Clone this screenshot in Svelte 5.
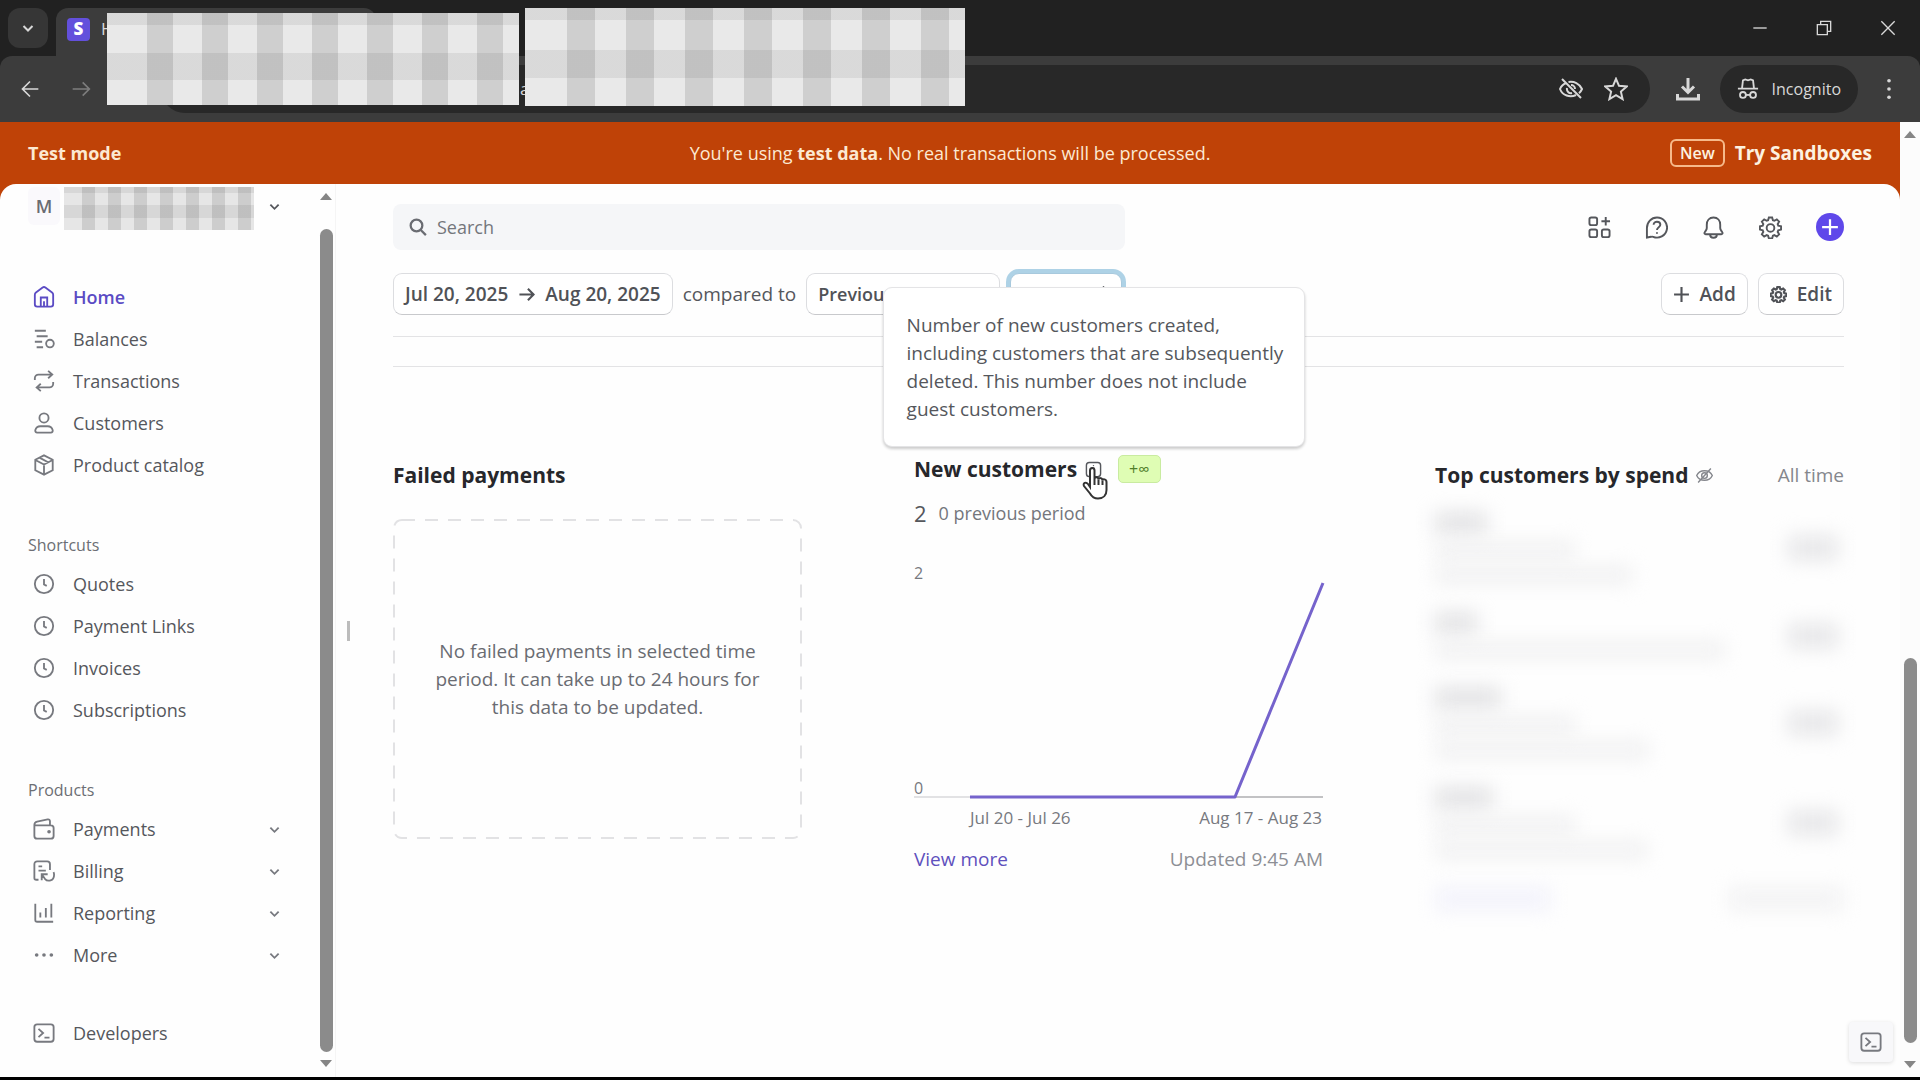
<script>
  const mainNav = [
    { label: 'Home', icon: 'home', active: true },
    { label: 'Balances', icon: 'balances' },
    { label: 'Transactions', icon: 'transfer' },
    { label: 'Customers', icon: 'person' },
    { label: 'Product catalog', icon: 'box' }
  ];
  const shortcuts = ['Quotes', 'Payment Links', 'Invoices', 'Subscriptions'];
  const products = [
    { label: 'Payments', icon: 'wallet' },
    { label: 'Billing', icon: 'billing' },
    { label: 'Reporting', icon: 'chart' },
    { label: 'More', icon: 'more' }
  ];
  const headerIcons = [
    { label: 'Apps', icon: 'apps' },
    { label: 'Help', icon: 'help' },
    { label: 'Notifications', icon: 'bell' },
    { label: 'Settings', icon: 'gear' }
  ];
  // Obscured customer rows: bar widths for the name and the detail lines
  const hiddenRows = [
    { name: 52, lines: [140, 198] },
    { name: 42, lines: [290] },
    { name: 66, lines: [140, 214] },
    { name: 58, lines: [140, 212] }
  ];
</script>

{#snippet icon(name)}
  <svg class="icon" viewBox="0 0 24 24" aria-hidden="true">
    {#if name === 'home'}
      <path d="M2 9.5c0-1 .4-1.8 1.200-2.400L10.500 1.600a2.500 2.500 0 0 1 3 0l7.300 5.500c.8.6 1.200 1.400 1.200 2.400V20a2.500 2.500 0 0 1-2.500 2.500h-15A2.500 2.500 0 0 1 2 20z" /><path d="M8.500 22.500v-10h7v10M12 22.500v-6" />
    {:else if name === 'balances'}
      <path d="M2 3h12M4 9h12M2 15h8M4 21h7" /><circle cx="18.500" cy="17" r="4.200" />
    {:else if name === 'transfer'}
      <path d="M2 11V9c0-2.200 1.800-4 4-4h15M16.500 1l4.500 4-4.500 4M22 13v2c0 2.200-1.800 4-4 4H4M8.500 15L4 19l4.500 4" />
    {:else if name === 'person'}
      <circle cx="12" cy="6.500" r="5" /><path d="M4.500 22.500c-1.400 0-2.300-1.200-2-2.600C3.200 17 5.500 15.500 8 15.500h8c2.500 0 4.800 1.500 5.500 4.400.3 1.400-.6 2.600-2 2.600z" />
    {:else if name === 'box'}
      <path d="M12 1.500l9.500 4.800v11.400L12 22.500l-9.500-4.800V6.300zM2.500 6.500L12 11.500l9.500-5M12 11.500v11M7 4l9.500 5" />
    {:else if name === 'clock'}
      <circle cx="12" cy="12" r="10" /><path d="M12 6.500v6l3 1.500" />
    {:else if name === 'wallet'}
      <path d="M1.500 8h18a3 3 0 0 1 3 3v8.500a3 3 0 0 1-3 3h-15a3 3 0 0 1-3-3V7.500C1.500 5.500 2.500 4.500 4.500 4L16 1.500c1.500-.3 2.500.5 2.500 2V8" /><circle cx="17.500" cy="15" r="1" />
    {:else if name === 'billing'}
      <path d="M6 21.500H3.500a2 2 0 0 1-2-2v-15a3 3 0 0 1 3-3h11a3 3 0 0 1 3 3V11M6 7h4M6 11.500h8M9.500 22v-6.500H16M9.500 15.500l3.500 5c3 3.500 10 2.500 10-4.500 0-1-.2-2-.6-2.800" />
    {:else if name === 'chart'}
      <path d="M2.500 2v17.500a2 2 0 0 0 2 2H22M8 11.500v5.500M14 6.500V17M20 2v15" />
    {:else if name === 'more'}
      <g class="solid"><circle cx="4" cy="12" r="2" /><circle cx="12" cy="12" r="2" /><circle cx="20" cy="12" r="2" /></g>
    {:else if name === 'terminal'}
      <rect x="1.500" y="2.500" width="21" height="19" rx="3" /><path d="M6 7.500l5 4.500-5 4.500M12.500 17H18" />
    {:else if name === 'apps'}
      <rect x="1.500" y="1.500" width="8" height="8" rx="2" /><rect x="1.500" y="14" width="8" height="8" rx="2" /><rect x="14.500" y="14" width="8" height="8" rx="2" /><path d="M18.500 1v9M14 5.500h9" />
    {:else if name === 'help'}
      <path d="M12.500 1.500a10.500 10.500 0 1 1-4 20.200c-.8-.3-1.400-.3-2.200 0L2 22.500v-10C2 6.500 6.500 1.500 12.500 1.500z" /><path d="M9 9c0-4 7-4 7 .2 0 2.500-3.500 2.500-3.500 5.300" /><circle class="solid" cx="12.500" cy="17.700" r="1" />
    {:else if name === 'bell'}
      <path d="M12 1.500c-4.500 0-7 3.500-7 7.500v3.500c0 1.200-.4 2-1.200 3l-1 1.500c-.7 1 0 2 1 2h16.400c1 0 1.700-1 1-2l-1-1.500c-.8-1-1.200-1.800-1.200-3V9c0-4-2.500-7.500-7-7.500zM8.500 19.500c0 4.300 7 4.300 7 0" />
    {:else if name === 'gear'}
      <path d="M10.300 1.500h3.400l.8 2.900 1.500.6 2.600-1.500 2.400 2.400L19.500 8.500l.6 1.500 2.900.8v3.400l-2.900.8-.6 1.500 1.500 2.600-2.400 2.400-2.600-1.500-1.500.6-.8 2.900h-3.400l-.8-2.900L8 20l-2.600 1.500L3 19.100l1.500-2.600-.6-1.500-2.900-.8v-3.400l2.900-.8.6-1.500L3 5.900l2.400-2.400L8 5l1.500-.6z" /><circle cx="12" cy="12.500" r="4" />
    {:else if name === 'search'}
      <circle cx="10" cy="10" r="7.800" /><path d="M15.700 16l6.800 6.800" />
    {:else if name === 'plus'}
      <path d="M12 1.500v21M1.500 12h21" />
    {:else if name === 'arrow'}
      <path d="M2 12h20M14 4l8 8-8 8" />
    {:else if name === 'back'}
      <path d="M22 12H3M12 3l-9 9 9 9" />
    {:else if name === 'chevron'}
      <path d="M3 8l9 9 9-9" />
    {:else if name === 'updown'}
      <path d="M6 8l6-6 6 6M6 16l6 6 6-6" />
    {:else if name === 'hidden'}
      <path d="M1 12c4-9 18-9 22 0-4 9-18 9-22 0zM3 22L21 2" /><circle cx="12" cy="12" r="4" />
    {:else if name === 'eyeoff'}
      <path d="M3 2l19 19M7.500 6C4 7 2 9.500 1 12c2.500 6.500 10 9 16 6M9.500 5C15 4 20.500 6.500 23 12c-.7 1.700-1.700 3-3 4.200M8 11c-.6 3 2 6 5 5M12 8c2.200 0 4 1.800 4 4" />
    {:else if name === 'star'}
      <path d="M12 1.800l3 7 7.700.7-5.800 5.100 1.700 7.500-6.600-4-6.600 4 1.700-7.500-5.800-5.100 7.700-.7z" />
    {:else if name === 'download'}
      <path d="M12 1v14M6 9.500l6 6 6-6M1.500 17v5h21v-5" />
    {:else if name === 'incognito'}
      <path d="M1 11.500h22M5.500 11l1-8.500 2.500-1 3 1 3-1 2.500 1 1 8.500" /><circle cx="6.500" cy="18.500" r="3.200" /><circle cx="17.500" cy="18.500" r="3.200" /><path d="M9.700 18.500h4.600" />
    {:else if name === 'dots'}
      <g class="solid"><circle cx="12" cy="3" r="2" /><circle cx="12" cy="12" r="2" /><circle cx="12" cy="21" r="2" /></g>
    {:else if name === 'minimize'}
      <path d="M2 12h20" />
    {:else if name === 'restore'}
      <path d="M2 7h15v15H2zM7 7V2h15v15h-5" />
    {:else if name === 'close'}
      <path d="M2 2l20 20M22 2L2 22" />
    {:else if name === 'info'}
      <rect x="2" y="2" width="20" height="20" rx="4" /><path d="M9 10h3.500v7" /><circle class="solid" cx="12" cy="6.500" r="1" />
    {/if}
  </svg>
{/snippet}

<div class="window">
  <header class="browser">
    <div class="tabstrip">
      <button class="tabsearch" aria-label="Search tabs">{@render icon('chevron')}</button>
      <div class="tab"><span class="favicon">S</span><span>H</span></div>
      <div class="wincontrols">
        <button aria-label="Minimize">{@render icon('minimize')}</button>
        <button aria-label="Restore">{@render icon('restore')}</button>
        <button aria-label="Close">{@render icon('close')}</button>
      </div>
    </div>
    <div class="toolbar">
      <button class="navbtn" aria-label="Back">{@render icon('back')}</button>
      <button class="navbtn dim" aria-label="Forward">{@render icon('arrow')}</button>
      <div class="address">
        <span class="url">a</span>
        <button aria-label="Third-party cookies blocked">{@render icon('eyeoff')}</button>
        <button aria-label="Bookmark">{@render icon('star')}</button>
      </div>
      <button class="download" aria-label="Downloads">{@render icon('download')}</button>
      <button class="incognito">{@render icon('incognito')}Incognito</button>
      <button class="menu" aria-label="Menu">{@render icon('dots')}</button>
    </div>
    <div class="mask mask-tab"></div>
    <div class="mask mask-url"></div>
  </header>

  <div class="viewport">
    <div class="page">
      <div class="banner">
        <strong>Test mode</strong>
        <span>You're using <b>test data</b>. No real transactions will be processed.</span>
        <a href="#sandboxes"><span class="new">New</span>Try Sandboxes</a>
      </div>
      <div class="body">
        <div class="sheet">
          <aside>
            <button class="account" aria-label="Switch account">
              <span class="avatar">M</span><span class="mask-name"></span><span class="caret">{@render icon('chevron')}</span>
            </button>
            <nav>
              <ul>
                {#each mainNav as item}
                  <li><a href="#{item.icon}" class:active={item.active}>{@render icon(item.icon)}{item.label}</a></li>
                {/each}
              </ul>
              <h2>Shortcuts</h2>
              <ul>
                {#each shortcuts as label}
                  <li><a href="#shortcut">{@render icon('clock')}{label}</a></li>
                {/each}
              </ul>
              <h2>Products</h2>
              <ul>
                {#each products as item}
                  <li><button class="group">{@render icon(item.icon)}{item.label}<span class="caret">{@render icon('chevron')}</span></button></li>
                {/each}
              </ul>
              <a class="developers" href="#developers">{@render icon('terminal')}Developers</a>
            </nav>
          </aside>
          <div class="sidescroll"><i class="up"></i><i class="thumb"></i><i class="down"></i></div>
          <div class="resizer"><i></i></div>

          <main>
            <div class="topbar">
              <label class="search">{@render icon('search')}<input type="text" placeholder="Search" aria-label="Search" /></label>
              <div class="actions">
                {#each headerIcons as item}
                  <button aria-label={item.label}>{@render icon(item.icon)}</button>
                {/each}
                <button class="create" aria-label="Create">{@render icon('plus')}</button>
              </div>
            </div>
            <div class="filters">
              <button class="btn">Jul 20, 2025 {@render icon('arrow')} Aug 20, 2025</button>
              <span class="compared">compared to</span>
              <select class="btn period" aria-label="Comparison period"><option>Previous period</option></select>
              <button class="btn focus">Weekly {@render icon('updown')}</button>
              <span class="grow"></span>
              <button class="btn">{@render icon('plus')} Add</button>
              <button class="btn">{@render icon('gear')} Edit</button>
            </div>
            <div class="rules"></div>

            <div class="widgets">
              <section>
                <div class="head"><h3>Failed payments</h3></div>
                <div class="empty">
                  <svg class="dash" aria-hidden="true"><rect x="1" y="1" rx="8" /></svg>
                  <p>No failed payments in selected time period. It can take up to 24 hours for this data to be updated.</p>
                </div>
              </section>

              <section>
                <div class="head compact">
                  <h3>New customers</h3>
                  <span class="infowrap">
                    <button class="info" aria-label="About this metric" aria-describedby="metric-tip">{@render icon('info')}</button>
                    <svg class="cursor" viewBox="0 0 26 34" aria-hidden="true">
                      <path d="M8 21V4.500C8 1 12.500 1 12.500 4.500V13c0-2.500 4-2.500 4 .5 0-2 4-2 4 1 0-2 4-1.500 4 1.500v8c0 5-3 8.500-8.500 8.500-4 0-6-1.500-8-5L2 20c-1.500-3 2-4.500 4-2z" />
                      <path d="M12.500 13v6M16.500 13.500V19M20.500 14.500V19" />
                    </svg>
                    <span class="tooltip" id="metric-tip" role="tooltip">Number of new customers created, including customers that are subsequently deleted. This number does not include guest customers.</span>
                  </span>
                  <span class="badge">+∞</span>
                </div>
                <div class="figures"><span class="big">2</span><span>0 previous period</span></div>
                <div class="chart">
                  <div class="scale"><span>2</span><span>0</span></div>
                  <svg viewBox="0 0 409 237" preserveAspectRatio="none" role="img" aria-label="New customers by week">
                    <path class="axis light" d="M0 235H56" /><path class="axis" d="M56 235H409" />
                    <path class="line" d="M56 235H321L409 21" />
                  </svg>
                </div>
                <div class="dates"><span>Jul 20 - Jul 26</span><span>Aug 17 - Aug 23</span></div>
                <div class="foot"><a href="#more">View more</a><span>Updated 9:45 AM</span></div>
              </section>

              <section>
                <div class="head"><h3>Top customers by spend</h3><span class="muted-icon">{@render icon('hidden')}</span><span class="range">All time</span></div>
                <div class="obscured" aria-hidden="true">
                  {#each hiddenRows as row}
                    <div class="hrow">
                      <div class="bars">
                        <i class="name" style:width="{row.name}px"></i>
                        {#each row.lines as width}
                          <i style:width="{width}px"></i>
                        {/each}
                      </div>
                      <i class="amount"></i>
                    </div>
                  {/each}
                  <div class="hfoot"><i class="link"></i><i></i></div>
                </div>
              </section>
            </div>
          </main>
        </div>
        <button class="workbench" aria-label="Open workbench">{@render icon('terminal')}</button>
      </div>
    </div>
    <div class="pagescroll"><i class="up"></i><i class="thumb"></i><i class="down"></i></div>
  </div>
</div>

<style>
  :global(body) { margin: 0; background: #000; }
  * { box-sizing: border-box; }
  button, input, select { font: inherit; color: inherit; border: 0; background: none; padding: 0; margin: 0; }
  a { color: inherit; text-decoration: none; }
  h2, h3, p, ul { margin: 0; padding: 0; list-style: none; }
  i { display: block; }
  .icon { display: block; width: 22px; height: 22px; flex: none; fill: none; stroke: currentColor; stroke-width: 2; }
  .icon .solid { fill: currentColor; stroke: none; }

  .window { height: 100vh; display: flex; flex-direction: column; overflow: hidden; border-bottom: 3px solid #000; font-family: "Open Sans", "Noto Sans", sans-serif; font-size: 18px; line-height: 28px; color: #55575c; }

  .browser { position: relative; flex: none; background: #212121; color: #d8d8d8; }
  .tabstrip { height: 56px; display: flex; align-items: flex-start; padding: 8px 18px 0 8px; gap: 8px; }
  .tabsearch { width: 40px; height: 40px; border-radius: 12px; background: #363636; display: grid; place-items: center; }
  .tabsearch .icon { width: 12px; stroke-width: 4; }
  .tab { width: 320px; height: 48px; border-radius: 12px 12px 0 0; background: #3c3c3c; padding: 0 11px 6px; display: flex; align-items: center; gap: 11px; font-size: 17px; }
  .favicon { width: 23px; height: 23px; border-radius: 4px; background: #6350dc; color: #fff; font-weight: 800; line-height: 22px; text-align: center; }
  .wincontrols { margin-left: auto; display: flex; gap: 48px; padding: 12px 6px; }
  .wincontrols .icon { width: 16px; height: 16px; }
  .toolbar { height: 66px; background: #3c3c3c; border-radius: 12px 12px 0 0; display: flex; align-items: center; padding: 0 20px 0 20px; }
  .navbtn .icon { width: 20px; height: 20px; stroke-width: 2; }
  .navbtn.dim { margin-left: 31px; color: #7d7d7d; }
  .address { flex: 1; height: 48px; margin-left: 70px; border-radius: 24px; background: #282828; display: flex; align-items: center; gap: 21px; padding-right: 22px; }
  .address .url { flex: 1; padding-left: 359px; font-size: 17px; }
  .address .icon { width: 24px; height: 24px; }
  .download { margin-left: 26px; }
  .download .icon { width: 24px; height: 24px; stroke-width: 3; }
  .incognito { height: 48px; margin-left: 20px; padding: 0 17px; border-radius: 24px; background: #282828; display: flex; align-items: center; gap: 13px; font-size: 16px; }
  .menu { margin-left: 20px; }
  .mask { position: absolute; background-color: #e9e9e9; }
  .mask-tab { left: 107px; top: 13px; width: 412px; height: 92px; background-image: linear-gradient(#0001 0 12px, #0000 12px 40px, #0001 40px 67px, #0000 67px), repeating-linear-gradient(90deg, #0000 0 29px, #0000001c 29px 55px); background-position: 0 0, 11px 0; }
  .mask-url { left: 525px; top: 8px; width: 440px; height: 98px; background-image: linear-gradient(#0001 0 12px, #0000 12px 42px, #0001 42px 70px, #0000 70px), repeating-linear-gradient(90deg, #0000 0 31px, #0000001c 31px 59px); background-position: 0 0, 11px 0; }

  .viewport { flex: 1; min-height: 0; display: flex; background: #fdfdfd; }
  .page { flex: 1; min-width: 0; display: flex; flex-direction: column; background: #bf4207; }
  .banner { height: 62px; flex: none; display: grid; grid-template-columns: 1fr auto 1fr; align-items: center; padding: 0 28px; color: #fce9d2; }
  .banner strong, .banner b, .banner a { font-weight: 700; }
  .banner a { justify-self: end; display: flex; align-items: center; gap: 10px; font-size: 19px; color: #fdf2e0; }
  .new { border: 2px solid #f6b98a; border-radius: 6px; padding: 0 8px; font-size: 16px; line-height: 24px; font-weight: 600; }
  .body { position: relative; flex: 1; min-height: 0; }
  .sheet { height: 100%; display: flex; background: #fefefe; border-radius: 16px 16px 0 0; overflow: hidden; }

  aside { width: 320px; flex: none; padding: 3px 40px 0 28px; }
  .account { width: 100%; height: 43px; display: flex; align-items: flex-start; }
  .avatar { width: 32px; height: 38px; border-radius: 6px; background: #faf9fc; color: #6a6c72; font-weight: 600; line-height: 38px; text-align: center; }
  .mask-name { width: 190px; height: 43px; margin-left: 4px; background-color: #e6e6e6; background-image: linear-gradient(#0001 0 6px, #0000 6px 18px, #0001 18px 31px, #0000 31px), repeating-linear-gradient(90deg, #0000 0 13px, #0000001c 13px 26px); background-position: 0 0, 5px 0; }
  .caret { margin-left: auto; }
  .account .caret { height: 38px; display: flex; align-items: center; }
  .caret .icon { width: 11px; height: 11px; stroke-width: 4; }
  nav { padding-top: 46px; }
  nav a, .group { width: 100%; height: 42px; padding-left: 5px; display: flex; align-items: center; gap: 18px; text-align: left; }
  nav .icon { color: #77797f; }
  nav .active, nav .active .icon { color: #5b4bc4; font-weight: 600; }
  h2 { font-size: 16px; line-height: 24px; font-weight: 400; color: #6c6e74; margin: 47px 0 6px; }
  .developers { margin-top: 36px; }
  .sidescroll, .pagescroll { display: flex; flex-direction: column; align-items: center; }
  .sidescroll { width: 16px; flex: none; padding: 9px 3px 10px 0; border-right: 1px solid #f5f5f5; }
  .pagescroll { width: 20px; flex: none; padding: 9px 0 9px; background: #fcfcfc; }
  .up, .down { border: 6px solid transparent; flex: none; }
  .up { border-top: 0; border-bottom: 7px solid #858585; }
  .down { border-bottom: 0; border-top: 7px solid #858585; }
  .thumb { width: 13px; border-radius: 7px; background: #8b8b8b; flex: 1; }
  .sidescroll .thumb { margin: 29px 0 8px; }
  .pagescroll .thumb { margin: 520px 0 18px; }
  .resizer { width: 14px; flex: none; display: flex; align-items: center; justify-content: flex-end; }
  .resizer i { width: 3px; height: 20px; background: #bcbcbc; }

  main { flex: 1; min-width: 0; padding: 20px 56px 0 43px; }
  .topbar { height: 46px; display: flex; align-items: center; justify-content: space-between; }
  .search { width: 732px; height: 46px; border-radius: 8px; background: #f5f6f8; display: flex; align-items: center; gap: 10px; padding: 0 16px; color: #6a6c72; }
  .search .icon { width: 18px; height: 18px; stroke-width: 3; }
  .search input { flex: 1; outline: 0; }
  .search input::placeholder { color: #74767c; opacity: 1; }
  .actions { display: flex; align-items: center; gap: 34px; }
  .actions .icon { width: 23px; height: 23px; stroke-width: 2; }
  .create { width: 28px; height: 28px; border-radius: 14px; background: #5f48ea; color: #fff; display: grid; place-items: center; }
  .actions .create .icon { width: 18px; height: 18px; stroke-width: 3; }
  .filters { margin-top: 23px; display: flex; align-items: center; gap: 10px; font-size: 19px; }
  .btn { height: 42px; padding: 0 11px; border: 1px solid #dcdde0; border-bottom-color: #c8c9cc; border-radius: 9px; background: #fff; font-weight: 600; color: #505257; display: flex; align-items: center; gap: 10px; white-space: nowrap; }
  .btn .icon { width: 17px; height: 17px; stroke-width: 3; }
  .period { width: 194px; appearance: none; font-size: 18px; }
  .focus { width: 112px; border-color: #a8c9dd; box-shadow: 0 0 0 4px #aed2e6; justify-content: space-between; font-size: 18px; }
  .grow { flex: 1; }
  .rules { margin-top: 21px; height: 31px; border: solid #e3e3e5; border-width: 1px 0; }
  .widgets { margin-top: 86px; display: grid; grid-template-columns: repeat(3, minmax(0, 1fr)); gap: 112px; }
  .head { height: 44px; display: flex; align-items: center; gap: 8px; }
  .head.compact { height: 32px; }
  h3 { font-size: 21px; font-weight: 700; color: #26272b; white-space: nowrap; }
  .empty { position: relative; height: 320px; margin-top: 22px; padding: 0 36px; display: grid; place-items: center; text-align: center; font-size: 19px; color: #6a6c72; }
  .dash { position: absolute; inset: 0; width: 100%; height: 100%; }
  .dash rect { width: calc(100% - 2px); height: calc(100% - 2px); fill: none; stroke: #e2e2e4; stroke-width: 2; stroke-dasharray: 13 10; }
  .infowrap { position: relative; display: flex; }
  .info .icon { width: 17px; height: 17px; }
  .cursor { position: absolute; z-index: 3; left: -3px; top: 5px; width: 26px; height: 34px; fill: #fff; stroke: #333; stroke-width: 2; }
  .cursor path + path { fill: none; }
  .tooltip { position: absolute; z-index: 2; left: 50%; bottom: calc(100% + 14px); width: 422px; margin-left: -211px; padding: 23px 20px 23px 23px; background: #fff; border: 1px solid #e4e4e6; border-radius: 9px; box-shadow: 0 2px 3px #0003; font-size: 19px; }
  .badge { height: 28px; margin-left: 8px; padding: 0 10px; border: 1px solid #c9eba0; border-radius: 5px; background: #dffdb4; color: #4f7d2a; font-size: 16px; line-height: 26px; }
  .figures { height: 56px; display: flex; align-items: center; gap: 12px; color: #74767c; }
  .big { font-size: 22px; color: #55575c; }
  .chart { height: 237px; margin-top: 21px; display: grid; }
  .chart > * { grid-area: 1 / 1; }
  .chart svg { width: 100%; height: 237px; overflow: visible; fill: none; }
  .axis { stroke: #c2c2c4; stroke-width: 2; }
  .axis.light { stroke: #e2e2e4; }
  .line { stroke: #7563cc; stroke-width: 3; stroke-linejoin: round; }
  .scale { display: flex; flex-direction: column; justify-content: space-between; font-size: 16px; line-height: 22px; color: #77797f; }
  .dates { display: flex; justify-content: space-between; padding: 8px 1px 0 56px; font-size: 17px; line-height: 22px; color: #77797f; }
  .foot { display: flex; justify-content: space-between; margin-top: 16px; font-size: 19px; color: #8d8f95; }
  .foot a { color: #5f50bd; }
  .muted-icon { color: #85878d; }
  .muted-icon .icon { width: 17px; height: 17px; }
  .range { margin-left: auto; font-size: 19px; color: #85878d; white-space: nowrap; }
  .obscured { padding-top: 16px; }
  .obscured i { background: #efeff0; filter: blur(10px); height: 16px; }
  .hrow { display: flex; justify-content: space-between; align-items: center; margin-bottom: 30px; }
  .bars { display: flex; flex-direction: column; gap: 9px; }
  .obscured .name { background: #e0e0e2; height: 20px; }
  .obscured .amount { width: 50px; height: 24px; margin-right: 6px; background: #e6e6e8; }
  .hfoot { display: flex; justify-content: space-between; }
  .obscured .hfoot i { width: 116px; height: 22px; background: #f2f2f3; }
  .obscured .hfoot .link { background: #f2f2fb; }
  .workbench { position: absolute; right: 7px; bottom: 15px; width: 44px; height: 40px; border-radius: 4px; background: #f8f8fa; box-shadow: 0 1px 4px #0002; display: grid; place-items: center; color: #77797f; }
</style>
